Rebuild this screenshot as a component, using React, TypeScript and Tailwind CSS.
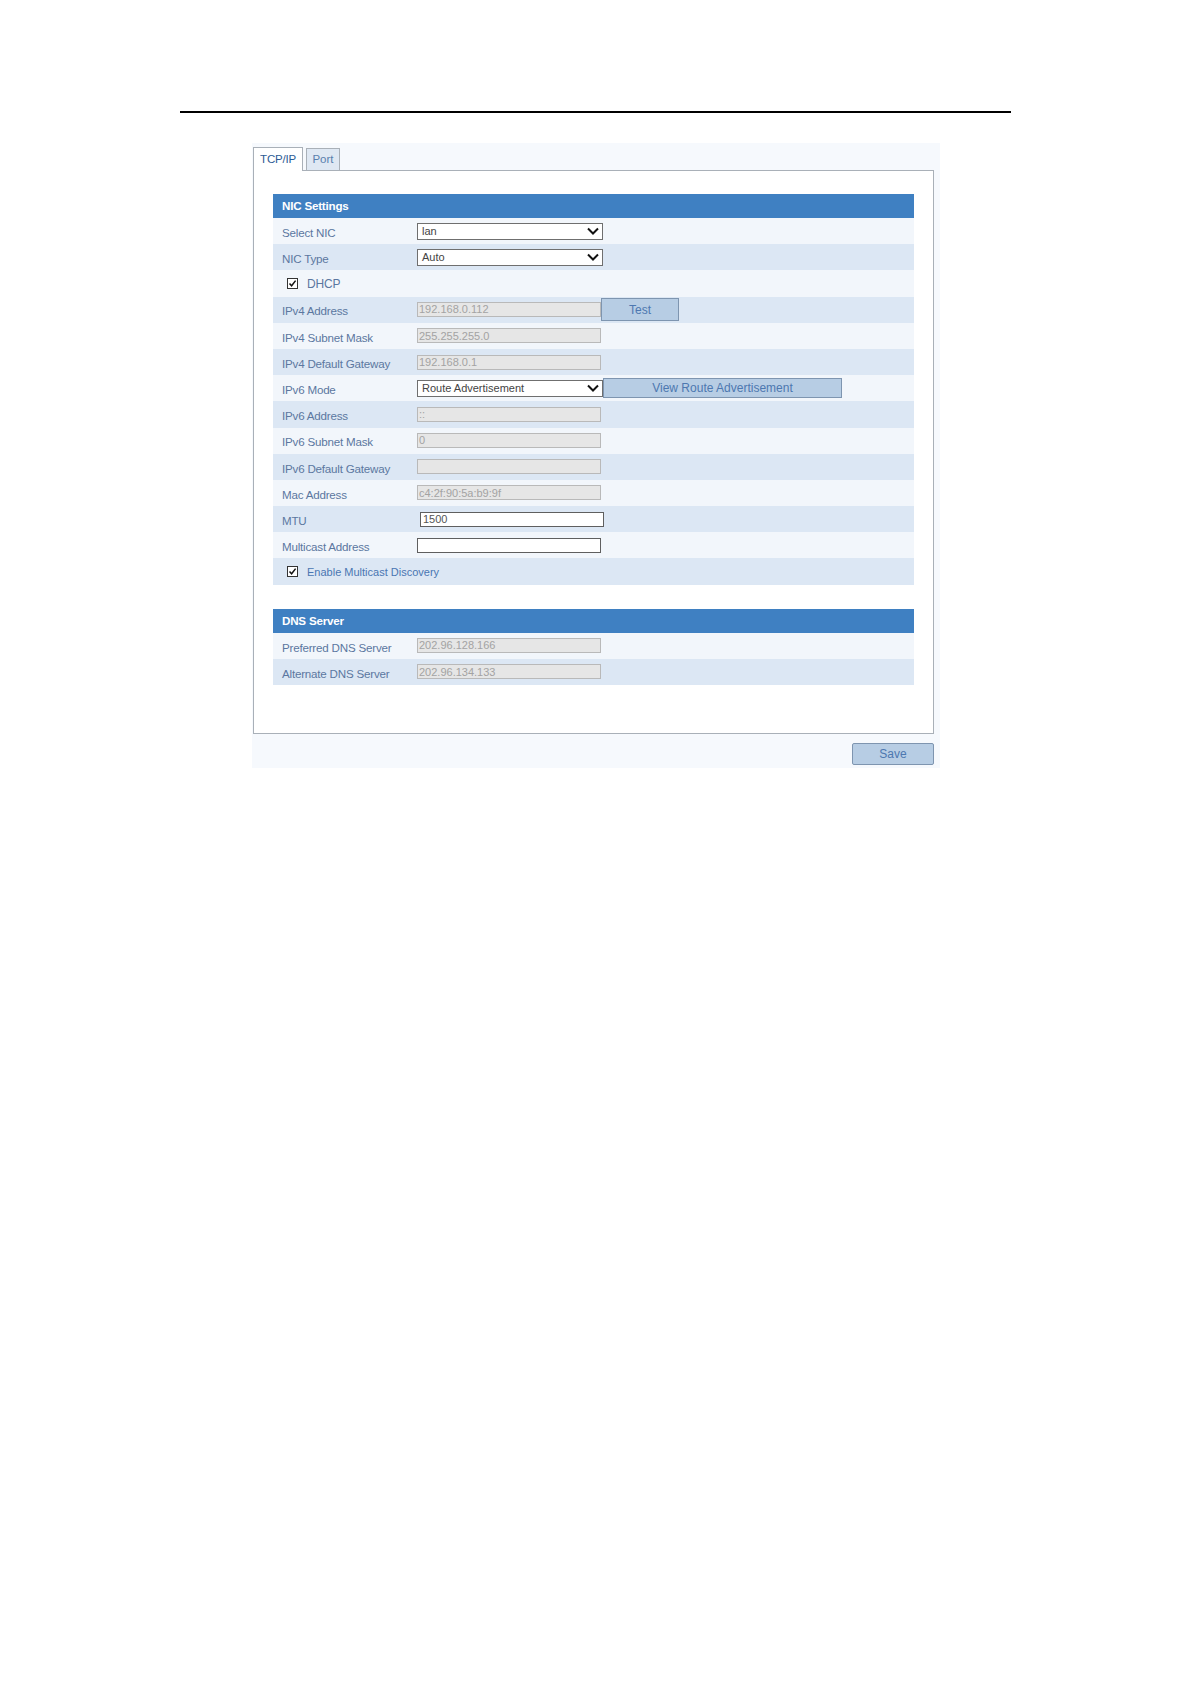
import React from "react";

type Row =
  | { kind: "select"; label: string; value: string; extra?: string }
  | { kind: "disabled"; label: string; value: string; extra?: string }
  | { kind: "input"; label: string; value: string; shift?: boolean }
  | { kind: "check"; label: string; blue?: boolean };

const nicRows: Row[] = [
  { kind: "select", label: "Select NIC", value: "lan" },
  { kind: "select", label: "NIC Type", value: "Auto" },
  { kind: "check", label: "DHCP" },
  { kind: "disabled", label: "IPv4 Address", value: "192.168.0.112", extra: "Test" },
  { kind: "disabled", label: "IPv4 Subnet Mask", value: "255.255.255.0" },
  { kind: "disabled", label: "IPv4 Default Gateway", value: "192.168.0.1" },
  { kind: "select", label: "IPv6 Mode", value: "Route Advertisement", extra: "View Route Advertisement" },
  { kind: "disabled", label: "IPv6 Address", value: "::" },
  { kind: "disabled", label: "IPv6 Subnet Mask", value: "0" },
  { kind: "disabled", label: "IPv6 Default Gateway", value: "" },
  { kind: "disabled", label: "Mac Address", value: "c4:2f:90:5a:b9:9f" },
  { kind: "input", label: "MTU", value: "1500", shift: true },
  { kind: "input", label: "Multicast Address", value: "" },
  { kind: "check", label: "Enable Multicast Discovery", blue: true },
];

const dnsRows: Row[] = [
  { kind: "disabled", label: "Preferred DNS Server", value: "202.96.128.166" },
  { kind: "disabled", label: "Alternate DNS Server", value: "202.96.134.133" },
];

function Chevron() {
  return (
    <svg width="12" height="8" viewBox="0 0 12 8" className="shrink-0">
      <path d="M1 1.5 L6 6.5 L11 1.5" fill="none" stroke="#111" strokeWidth="2" />
    </svg>
  );
}

function CheckBox() {
  return (
    <span className="flex h-[11px] w-[11px] items-center justify-center border border-[#333] bg-white">
      <svg width="9" height="9" viewBox="0 0 9 9">
        <path d="M1.5 4.5 L3.6 6.8 L7.6 1.6" fill="none" stroke="#111" strokeWidth="1.5" />
      </svg>
    </span>
  );
}

function FormRow({ row, i }: { row: Row; i: number }) {
  const stripe = i % 2 === 1 ? "bg-[#dce7f4]" : "bg-[#f2f6fb]";

  if (row.kind === "check") {
    return (
      <div className={`flex h-[26.2px] items-center pl-[14px] ${stripe}`}>
        <CheckBox />
        <span
          className={`ml-[9px] pt-[2px] ${
            row.blue ? "text-[11px] text-[#4a76b2]" : "text-[12px] tracking-[-0.2px] text-[#5b77a0]"
          }`}
        >
          {row.label}
        </span>
      </div>
    );
  }

  return (
    <div className={`flex h-[26.2px] items-center ${stripe}`}>
      <div className="w-[144px] shrink-0 pl-[9px] pt-[3px] text-[11.6px] tracking-[-0.2px] text-[#5b77a0]">
        {row.label}
      </div>
      {row.kind === "select" && (
        <div className="flex h-[17px] w-[186px] items-center justify-between border border-[#6f6f6f] bg-white pl-[4px] pr-[3px] text-[11px] text-[#444]">
          <span>{row.value}</span>
          <Chevron />
        </div>
      )}
      {row.kind === "disabled" && (
        <div className="flex h-[15px] w-[184px] items-center border border-[#b9b9b9] bg-[#e6e6e6] pl-[1px] text-[11px] text-[#a3a3a3]">
          {row.value}
        </div>
      )}
      {row.kind === "input" && (
        <div
          className={`flex h-[15px] w-[184px] items-center border border-[#5f5f5f] bg-white pl-[2px] text-[11px] text-[#555] ${
            row.shift ? "ml-[3px]" : ""
          }`}
        >
          {row.value}
        </div>
      )}
      {row.extra === "Test" && (
        <div className="flex h-[23px] w-[78px] items-center justify-center border border-[#7e95b0] bg-[#b7cde4] text-[#4d78b0]">
          Test
        </div>
      )}
      {row.extra === "View Route Advertisement" && (
        <div className="flex h-[20px] w-[239px] items-center justify-center border border-[#7e95b0] bg-[#b7cde4] text-[#4d78b0]">
          View Route Advertisement
        </div>
      )}
    </div>
  );
}

function SectionHeader({ title }: { title: string }) {
  return (
    <div className="flex h-[24px] items-center bg-[#3f80c2] pl-[9px] text-[11.6px] font-bold tracking-[-0.2px] text-white">
      {title}
    </div>
  );
}

export default function App() {
  return (
    <div
      className="min-h-[1684px] w-[1191px] bg-white pt-[111px] text-[12px]"
      style={{ fontFamily: '"Liberation Sans", Arial, sans-serif' }}
    >
      {/* page rule */}
      <div className="ml-[180px] h-[2px] w-[831px] bg-black" />

      {/* settings panel */}
      <div className="ml-[252px] mt-[30px] w-[688px] bg-[#f6f9fd] pb-[3px] pt-[4px]">
        {/* tabs */}
        <div className="ml-[1px] flex items-end gap-[3px]">
          <div className="relative z-10 -mb-px flex h-[24px] w-[50px] items-center justify-center border border-b-0 border-[#a9b0b8] bg-white text-[11.5px] tracking-[-0.2px] text-[#2d5b94]">
            TCP/IP
          </div>
          <div className="flex h-[22px] w-[34px] items-center justify-center border border-b-0 border-[#a9b0b8] bg-[#dfe8f3] text-[11.5px] text-[#5a7fae]">
            Port
          </div>
        </div>

        <div className="ml-[1px] w-[681px] border border-[#a9b0b8] bg-white pb-[48px] pl-[19px] pt-[23px]">
          <div className="w-[641px]">
            <SectionHeader title="NIC Settings" />
            {nicRows.map((row, i) => (
              <FormRow key={row.label} row={row} i={i} />
            ))}

            <div className="mt-[24px]">
              <SectionHeader title="DNS Server" />
              {dnsRows.map((row, i) => (
                <FormRow key={row.label} row={row} i={i} />
              ))}
            </div>
          </div>
        </div>

        <div className="mt-[9px] flex justify-end pr-[6px]">
          <div className="flex h-[22px] w-[82px] items-center justify-center rounded-[2px] border border-[#7e95b0] bg-[#b7cde4] text-[#4d78b0]">
            Save
          </div>
        </div>
      </div>
    </div>
  );
}
